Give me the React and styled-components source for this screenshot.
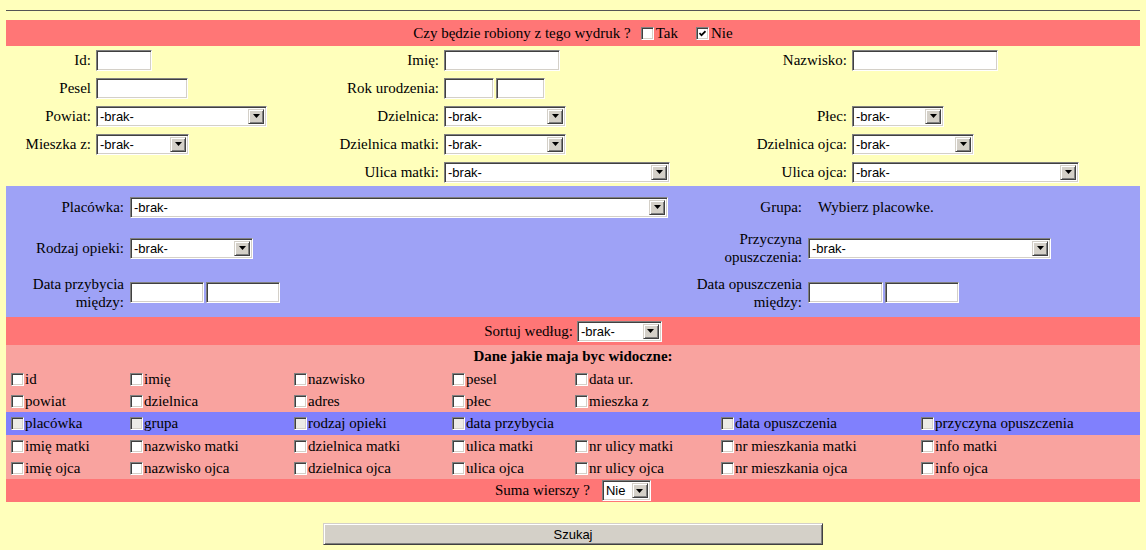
import styled, { createGlobalStyle } from "styled-components";

const GlobalStyle = createGlobalStyle`
  body {
    margin: 0;
    background: #ffffbb;
    font-family: "Liberation Serif", "Times New Roman", serif;
    font-size: 15px;
    color: #000;
  }
`;

const Strona = styled.div`
  padding: 0 6px;
`;

const Linia = styled.hr`
  margin: 10px 0 9px;
  border: 0;
  border-top: 1px solid #555;
  height: 0;
`;

// pasek z wysrodkowana trescia (czerwone paski)
const Pasek = styled.div`
  display: flex;
  align-items: center;
  justify-content: center;
  height: ${(p) => p.$h}px;
  background: ${(p) => p.$bg};
  white-space: nowrap;
`;

const Siatka = styled.div`
  display: grid;
  grid-template-columns: ${(p) => p.$cols};
  grid-template-rows: ${(p) => p.$rows || "none"};
  grid-auto-rows: ${(p) => p.$auto || "auto"};
  background: ${(p) => p.$bg || "transparent"};
`;

const Etykieta = styled.div`
  display: flex;
  align-items: center;
  justify-content: flex-end;
  text-align: right;
  padding-right: ${(p) => p.$pr ?? 2}px;
  line-height: 18px;
  white-space: nowrap;
`;

const Pole = styled.div`
  display: flex;
  align-items: center;
  gap: 2px;
  padding-left: ${(p) => p.$pl ?? 3}px;
`;

const Tekst = styled.span`
  padding-left: 10px;
`;

const PoleTekstowe = styled.input`
  box-sizing: border-box;
  width: ${(p) => p.$w}px;
  height: 21px;
  margin: 0;
  padding: 0 2px;
  background: #fff;
  border: 1px solid;
  border-color: #808080 #fff #fff #808080;
  box-shadow: inset 1px 1px #404040, inset -1px -1px #d4d0c8;
  font: 13px "Liberation Sans", Arial, sans-serif;
  outline: none;
`;

const Lista = styled.div`
  box-sizing: border-box;
  display: inline-flex;
  align-items: stretch;
  width: ${(p) => p.$w}px;
  height: 21px;
  padding: 2px;
  background: #fff;
  border: 1px solid;
  border-color: #808080 #fff #fff #808080;
  box-shadow: inset 1px 1px #404040, inset -1px -1px #d4d0c8;
  font: 13px "Liberation Sans", Arial, sans-serif;
`;

const ListaWartosc = styled.span`
  flex: 1;
  display: flex;
  align-items: center;
  padding-left: 1px;
  overflow: hidden;
`;

const Strzalka = styled.span`
  box-sizing: border-box;
  width: 16px;
  display: flex;
  align-items: center;
  justify-content: center;
  background: #d4d0c8;
  border: 1px solid;
  border-color: #d4d0c8 #404040 #404040 #d4d0c8;
  box-shadow: inset 1px 1px #fff, inset -1px -1px #808080;
`;

const Wybor = ({ w, value = "-brak-" }) => (
  <Lista $w={w}>
    <ListaWartosc>{value}</ListaWartosc>
    <Strzalka>
      <svg width="7" height="4" viewBox="0 0 7 4">
        <polygon points="0,0 7,0 3.5,4" fill="#000" />
      </svg>
    </Strzalka>
  </Lista>
);

const Pudelko = styled.span`
  box-sizing: border-box;
  display: inline-flex;
  align-items: center;
  justify-content: center;
  flex: none;
  width: 13px;
  height: 13px;
  background: ${(p) => (p.$szary ? "#ecebe6" : "#fff")};
  border: 1px solid;
  border-color: #808080 #fff #fff #808080;
  box-shadow: inset 1px 1px #404040, inset -1px -1px #d4d0c8;
`;

const Pole_wyboru = ({ checked, szary }) => (
  <Pudelko $szary={szary}>
    {checked && (
      <svg width="7" height="7" viewBox="0 0 7 7">
        <polyline points="0.5,3 2.5,5.2 6.5,1.2" fill="none" stroke="#000" strokeWidth="1.7" />
      </svg>
    )}
  </Pudelko>
);

const Opcja = styled.label`
  display: flex;
  align-items: center;
  gap: 1px;
  padding-left: 3px;
  white-space: nowrap;
`;

const OpcjaPaska = styled.label`
  display: inline-flex;
  align-items: center;
  gap: 2px;
  margin-left: ${(p) => p.$ml}px;
`;

const WierszOpcji = styled.div`
  display: grid;
  grid-template-columns: 119px 164px 158px 123px 146px 200px 1fr;
  height: ${(p) => p.$h || 22}px;
  padding-left: 2px;
  background: ${(p) => p.$bg};
`;

const Tytul = styled.div`
  height: 23px;
  display: flex;
  align-items: center;
  justify-content: center;
  font-weight: bold;
  background: #f9a39f;
`;

const Odstep = styled.span`
  margin-right: ${(p) => p.$w}px;
`;

const WierszPrzycisku = styled.div`
  display: flex;
  justify-content: center;
  padding-top: 21px;
`;

const Przycisk = styled.button`
  box-sizing: border-box;
  width: 500px;
  height: 22px;
  margin: 0;
  background: #d4d0c8;
  border: 1px solid;
  border-color: #d4d0c8 #404040 #404040 #d4d0c8;
  box-shadow: inset 1px 1px #fff, inset -1px -1px #808080;
  font: 13px "Liberation Sans", Arial, sans-serif;
  color: #000;
`;

const CZERWONY = "#ff7676";
const ROZOWY = "#f9a39f";
const NIEBIESKI = "#8080fd";

const opcje = [
  { bg: ROZOWY, items: ["id", "imię", "nazwisko", "pesel", "data ur."] },
  { bg: ROZOWY, items: ["powiat", "dzielnica", "adres", "płec", "mieszka z"] },
  {
    bg: NIEBIESKI,
    h: 23,
    szary: true,
    items: ["placówka", "grupa", "rodzaj opieki", "data przybycia", null, "data opuszczenia", "przyczyna opuszczenia"],
  },
  {
    bg: ROZOWY,
    items: ["imię matki", "nazwisko matki", "dzielnica matki", "ulica matki", "nr ulicy matki", "nr mieszkania matki", "info matki"],
  },
  {
    bg: ROZOWY,
    items: ["imię ojca", "nazwisko ojca", "dzielnica ojca", "ulica ojca", "nr ulicy ojca", "nr mieszkania ojca", "info ojca"],
  },
];

export default function App() {
  return (
    <>
      <GlobalStyle />
      <Strona>
        <Linia />
        <Pasek $h={26} $bg={CZERWONY}>
          <span>Czy będzie robiony z tego wydruk ?</span>
          <OpcjaPaska $ml={10}>
            <Pole_wyboru />
            Tak
          </OpcjaPaska>
          <OpcjaPaska $ml={18}>
            <Pole_wyboru checked />
            Nie
          </OpcjaPaska>
        </Pasek>

        <Siatka $cols="87px 247px 101px 259px 149px 1fr" $auto="28px">
          <Etykieta>Id:</Etykieta>
          <Pole><PoleTekstowe $w={56} /></Pole>
          <Etykieta>Imię:</Etykieta>
          <Pole><PoleTekstowe $w={116} /></Pole>
          <Etykieta>Nazwisko:</Etykieta>
          <Pole><PoleTekstowe $w={146} /></Pole>

          <Etykieta>Pesel</Etykieta>
          <Pole><PoleTekstowe $w={92} /></Pole>
          <Etykieta>Rok urodzenia:</Etykieta>
          <Pole>
            <PoleTekstowe $w={50} />
            <PoleTekstowe $w={49} />
          </Pole>
          <div />
          <div />

          <Etykieta>Powiat:</Etykieta>
          <Pole><Wybor w={171} /></Pole>
          <Etykieta>Dzielnica:</Etykieta>
          <Pole><Wybor w={122} /></Pole>
          <Etykieta>Płec:</Etykieta>
          <Pole><Wybor w={92} /></Pole>

          <Etykieta>Mieszka z:</Etykieta>
          <Pole><Wybor w={93} /></Pole>
          <Etykieta>Dzielnica matki:</Etykieta>
          <Pole><Wybor w={122} /></Pole>
          <Etykieta>Dzielnica ojca:</Etykieta>
          <Pole><Wybor w={122} /></Pole>

          <div />
          <div />
          <Etykieta>Ulica matki:</Etykieta>
          <Pole><Wybor w={226} /></Pole>
          <Etykieta>Ulica ojca:</Etykieta>
          <Pole><Wybor w={227} /></Pole>
        </Siatka>

        <Siatka $cols="121px 565px 113px 1fr" $rows="42px 40px 49px" $bg="#9ea2f6">
          <Etykieta $pr={3}>Placówka:</Etykieta>
          <Pole><Wybor w={538} /></Pole>
          <Etykieta $pr={3}>Grupa:</Etykieta>
          <Pole><Tekst>Wybierz placowke.</Tekst></Pole>

          <Etykieta $pr={3}>Rodzaj opieki:</Etykieta>
          <Pole><Wybor w={123} /></Pole>
          <Etykieta $pr={3}>
            Przyczyna
            <br />
            opuszczenia:
          </Etykieta>
          <Pole><Wybor w={243} /></Pole>

          <Etykieta $pr={3}>
            Data przybycia
            <br />
            między:
          </Etykieta>
          <Pole>
            <PoleTekstowe $w={74} />
            <PoleTekstowe $w={74} />
          </Pole>
          <Etykieta $pr={3}>
            Data opuszczenia
            <br />
            między:
          </Etykieta>
          <Pole>
            <PoleTekstowe $w={75} />
            <PoleTekstowe $w={74} />
          </Pole>
        </Siatka>

        <Pasek $h={28} $bg={CZERWONY}>
          <Odstep $w={4}>Sortuj według:</Odstep>
          <Wybor w={85} />
        </Pasek>

        <Tytul>Dane jakie maja byc widoczne:</Tytul>
        {opcje.map((wiersz, i) => (
          <WierszOpcji key={i} $bg={wiersz.bg} $h={wiersz.h}>
            {wiersz.items.map((nazwa, j) =>
              nazwa ? (
                <Opcja key={j}>
                  <Pole_wyboru szary={wiersz.szary} />
                  {nazwa}
                </Opcja>
              ) : (
                <div key={j} />
              )
            )}
          </WierszOpcji>
        ))}

        <Pasek $h={23} $bg={CZERWONY}>
          <Odstep $w={12}>Suma wierszy ?</Odstep>
          <Wybor w={49} value="Nie" />
        </Pasek>

        <WierszPrzycisku>
          <Przycisk>Szukaj</Przycisk>
        </WierszPrzycisku>
      </Strona>
    </>
  );
}
